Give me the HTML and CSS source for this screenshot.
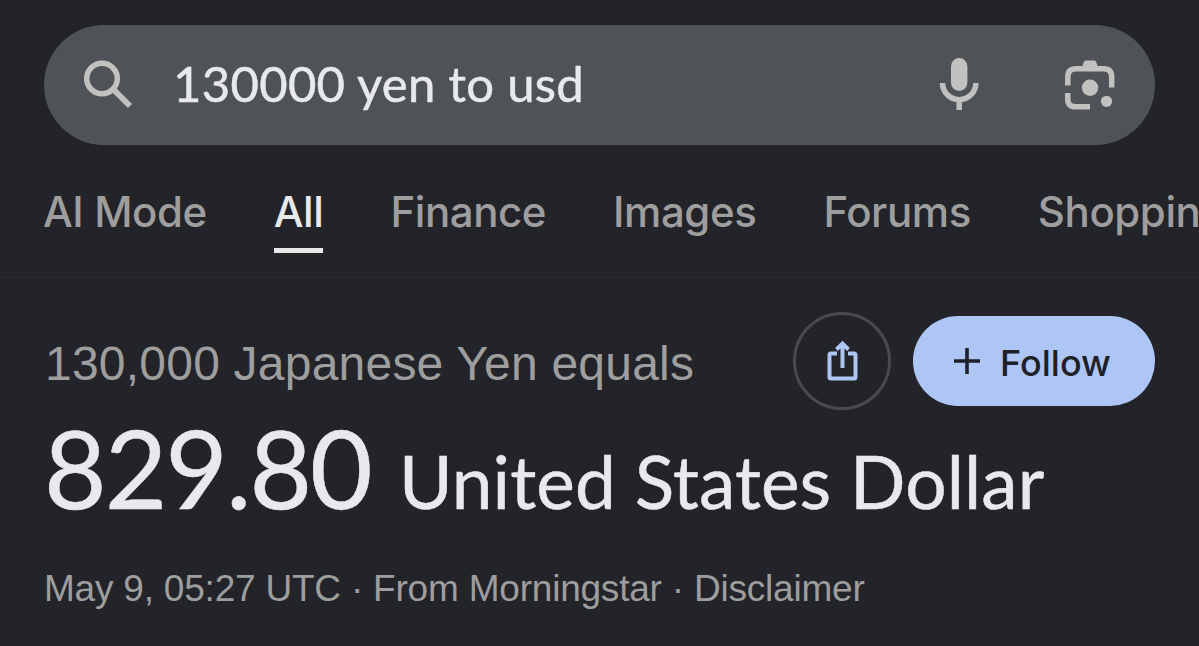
FILE: index.html
```html
<!DOCTYPE html>
<html lang="en">
<head>
  <meta charset="UTF-8" />
  <meta name="viewport" content="width=device-width, initial-scale=1.0">
  <title>130000 yen to usd</title>
  <link rel="stylesheet" href="styles.css">
</head>
<body>
  <header>
    <div class="search-bar">
      <svg class="icon-search" viewBox="0 0 50 50" width="50" height="50">
        <circle cx="18" cy="18.500" r="15.300" fill="none" stroke="currentColor" stroke-width="5.500"/>
        <path d="M30 30L46 46" stroke="currentColor" stroke-width="6"/>
      </svg>
      <span class="query">130000 yen to usd</span>
      <svg class="icon-mic" viewBox="0 0 40 54" width="40" height="54">
        <rect x="12" y="0" width="16.400" height="33" rx="8.200" fill="currentColor"/>
        <path d="M3.500 25a16.700 16.700 0 0 0 33.400 0M20.200 41v11" fill="none" stroke="currentColor" stroke-width="5.500"/>
      </svg>
      <svg class="icon-lens" viewBox="0 0 50 50" width="50" height="50">
        <path d="M2.800 25.500V17Q2.800 8.800 11 8.800H38.500Q46.700 8.800 46.700 17V27.500M2.800 33V39.500Q2.800 46.800 11 46.800H25" fill="none" stroke="currentColor" stroke-width="5.500"/>
        <path d="M17 7L19 1.800Q19.500 .600 21 .600H29Q30.500 .600 31 1.800L33 7Z" fill="currentColor"/>
        <circle cx="25" cy="27.700" r="8.200" fill="currentColor"/>
        <circle cx="41.500" cy="41.300" r="5.600" fill="currentColor"/>
      </svg>
    </div>
    <nav class="tabs">
      <a class="tab">AI Mode</a>
      <a class="tab active">All</a>
      <a class="tab">Finance</a>
      <a class="tab">Images</a>
      <a class="tab">Forums</a>
      <a class="tab">Shopping</a>
    </nav>
  </header>

  <main>
    <div class="top-row">
      <div class="source">130,000 Japanese Yen equals</div>
      <button class="share" aria-label="Share">
        <svg viewBox="0 0 32 42" width="32" height="42">
          <path d="M11 13.500H5Q3.500 13.500 3.500 15V37Q3.500 38.500 5 38.500H28Q29.500 38.500 29.500 37V15Q29.500 13.500 28 13.500H22" fill="none" stroke="currentColor" stroke-width="4"/>
          <path d="M16.500 28V4M10.500 9.500L16.500 3.500L22.500 9.500" fill="none" stroke="currentColor" stroke-width="4"/>
        </svg>
      </button>
      <button class="follow">
        <svg viewBox="0 0 26 26" width="26" height="26">
          <path d="M0 13H26M13 0V26" stroke="currentColor" stroke-width="3.600"/>
        </svg>
        <span>Follow</span>
      </button>
    </div>
    <div class="result"><span class="amount">829.80</span><span class="currency">United States Dollar</span></div>
    <p class="meta">May 9, 05:27 UTC · From Morningstar · Disclaimer</p>
  </main>
</body>
</html>
```
FILE: styles.css
```css
* {
  box-sizing: border-box;
}
body {
  margin: 0;
  height: 646px;
  overflow: hidden;
  background-color: #232429;
  color: #e8e9ed;
  font-family: "Liberation Sans", Arial, sans-serif;
}
svg {
  display: block;
  flex: none;
}
header {
  height: 278px;
  padding: 25px 44px 0;
  border-bottom: 2px solid #27282c;
}
.search-bar {
  display: flex;
  align-items: center;
  height: 120px;
  padding: 0 40px;
  border-radius: 60px;
  background-color: #4f5256;
  color: #c1c1c0;
}
.query {
  flex: 1;
  margin-left: 39px;
  padding-bottom: 4px;
  color: #e8e9ed;
  font-family: Lato, sans-serif;
  font-size: 49px;
  letter-spacing: 0.3px;
  -webkit-text-stroke: 0.5px;
  white-space: nowrap;
}
.icon-lens {
  margin-left: 86px;
}
.tabs {
  display: flex;
  gap: 67px;
  margin: 37px 0 0 -1px;
}
.tab {
  flex: none;
  height: 71px;
  color: #9e9e9e;
  font-family: Inter, sans-serif;
  font-size: 42px;
  font-weight: 500;
  letter-spacing: -0.43px;
  line-height: 60px;
  white-space: nowrap;
}
.tab.active {
  color: #e8e9e9;
  border-bottom: 5px solid #e8e9e9;
}
main {
  padding: 34px 44px 0;
}
.top-row {
  display: flex;
  align-items: center;
  height: 98px;
}
.source {
  flex: 1;
  padding: 4px 0 0 1px;
  color: #9e9e9e;
  font-size: 48px;
  letter-spacing: 0.22px;
  white-space: nowrap;
}
button {
  display: flex;
  align-items: center;
  justify-content: center;
  flex: none;
  padding: 0;
  border: none;
  font-family: inherit;
}
.share {
  width: 98px;
  height: 98px;
  border: 3px solid #4a4a4a;
  border-radius: 50%;
  background: none;
  color: #aec6f6;
}
.follow {
  gap: 20px;
  width: 242px;
  height: 90px;
  margin-left: 22px;
  padding-right: 3px;
  border-radius: 45px;
  background-color: #aec6f6;
  color: #202127;
  font-family: Inter, sans-serif;
  font-size: 36px;
  font-weight: 500;
}
.follow span {
  padding-top: 4px;
}
.result {
  display: flex;
  align-items: baseline;
  height: 128px;
  font-family: Lato, sans-serif;
  line-height: 114px;
  white-space: nowrap;
}
.amount {
  width: 355px;
  font-size: 108px;
  letter-spacing: -2px;
  -webkit-text-stroke: 0.5px;
}
.currency {
  font-size: 73px;
  letter-spacing: 0.1px;
  -webkit-text-stroke: 0.5px;
}
.meta {
  margin: 30px 0 0;
  color: #9e9e9e;
  font-size: 37px;
  letter-spacing: -0.21px;
  line-height: 42px;
  white-space: nowrap;
}
```
